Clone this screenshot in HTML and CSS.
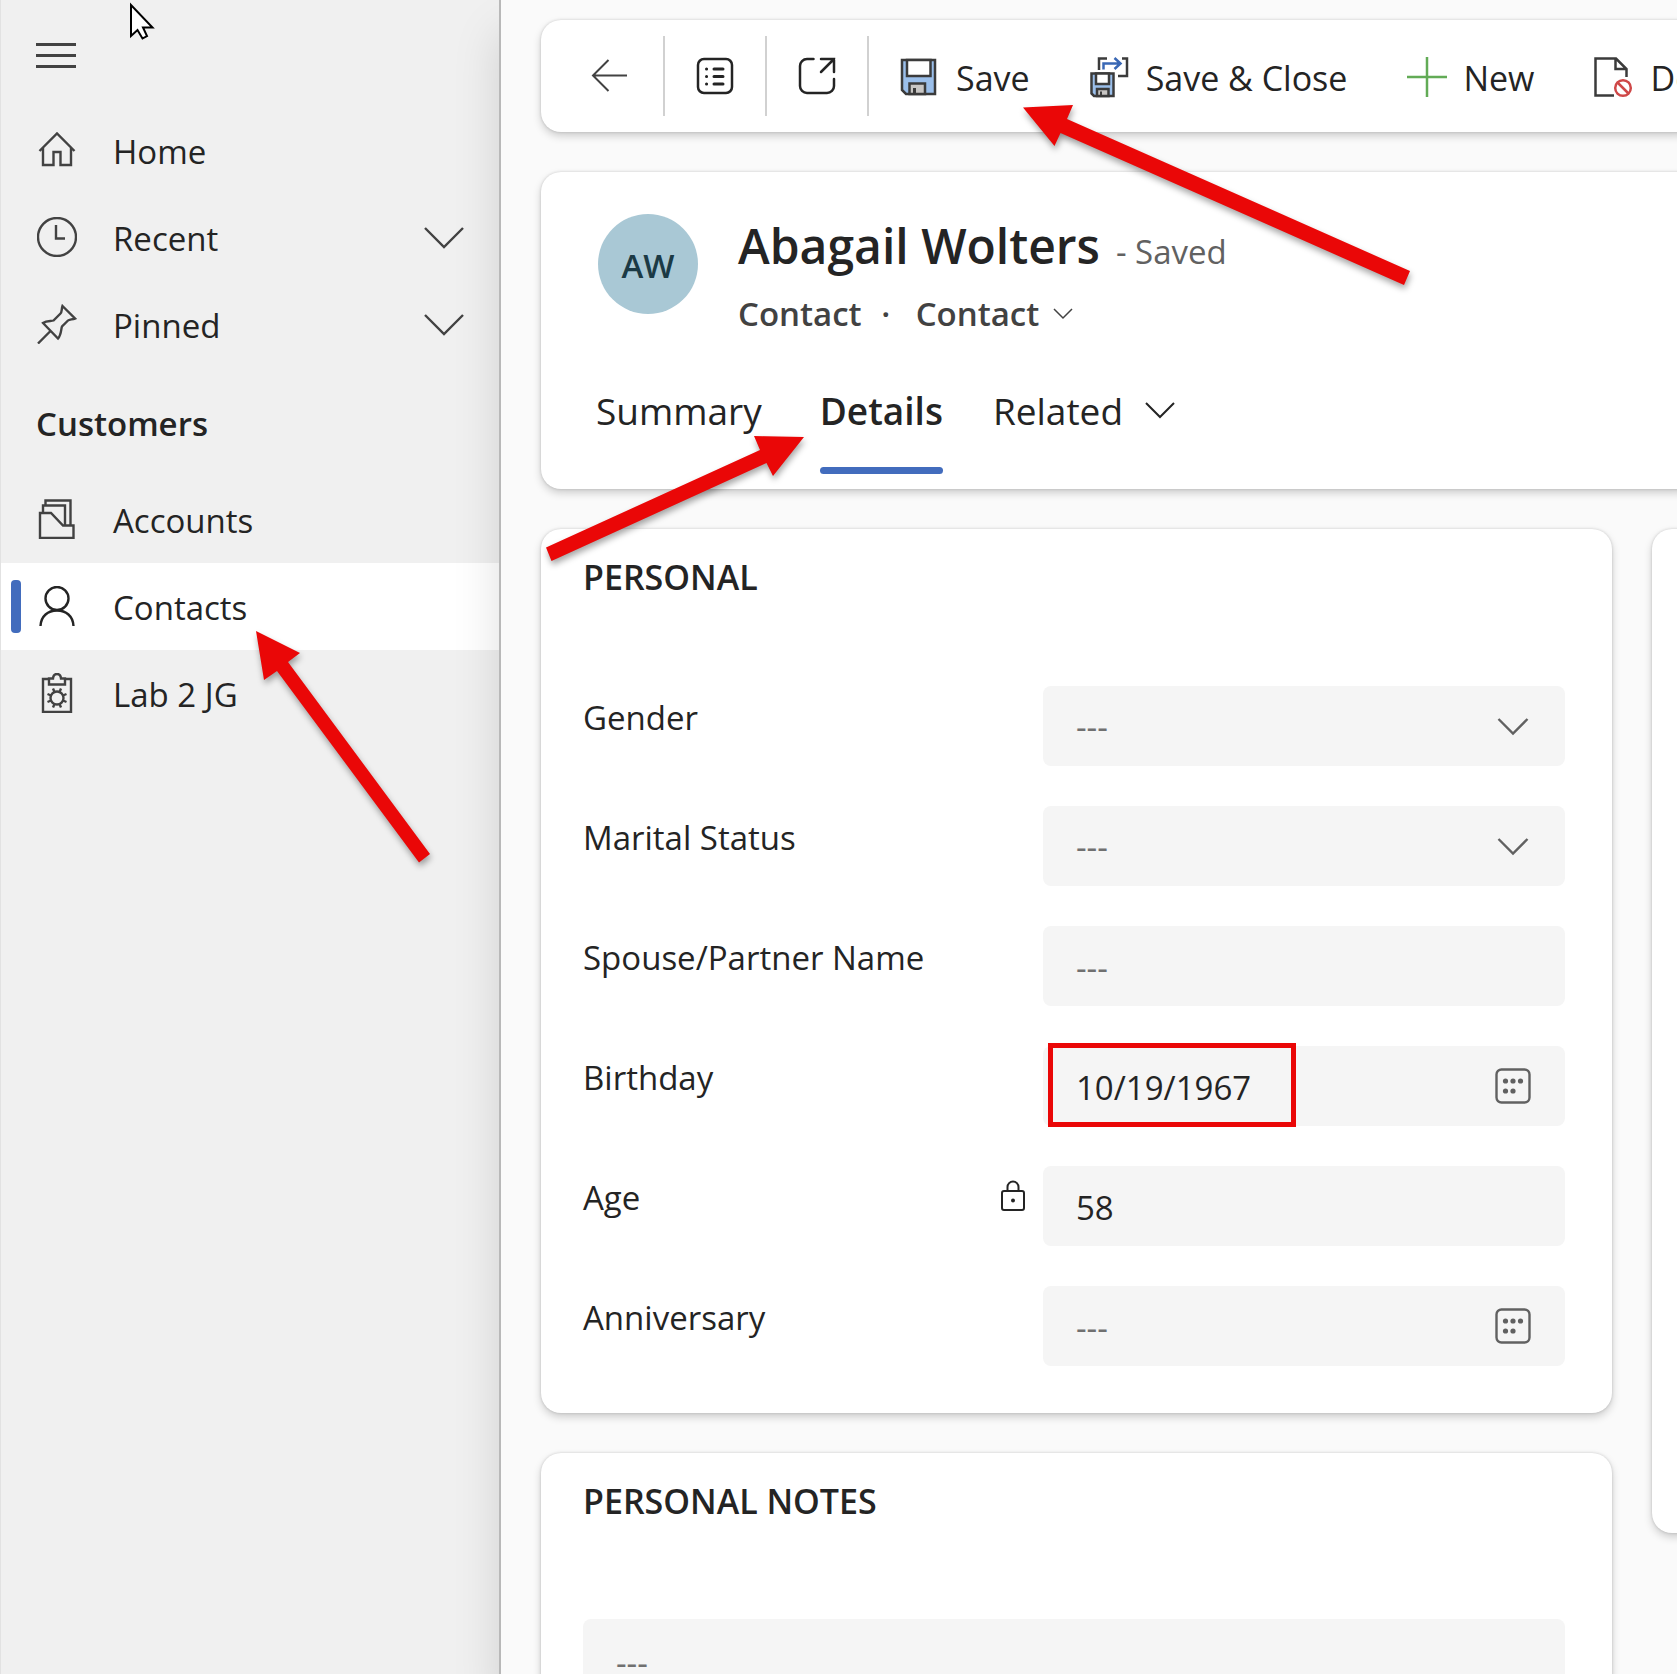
FILE: index.html
```html
<!DOCTYPE html>
<html lang="en">
<head>
<meta charset="utf-8">
<meta name="viewport" content="width=device-width, initial-scale=1">
<title>Contact: Abagail Wolters</title>
<link rel="stylesheet" href="styles.css">
</head>
<body>
<div class="app">
  <nav class="sidebar" aria-label="Site map">
    <button class="menu-toggle" type="button" aria-label="Toggle navigation">
      <svg width="40" height="40" viewBox="0 0 40 40" fill="none" stroke="#424242" stroke-width="3"><path d="M0 8.500h40M0 19.500h40M0 30.500h40"/></svg>
    </button>
    <a class="nav-item" href="#home">
      <svg class="nav-icon" viewBox="0 0 40 40"><path d="M2.500 21 20 3.500 37.500 21M6 18v17h10.500V22h7v13H34V18"/></svg>
      <span>Home</span>
    </a>
    <button class="nav-item" type="button">
      <svg class="nav-icon" viewBox="0 0 40 40"><circle cx="20" cy="20" r="19"/><path d="M19 8v13.500h9"/></svg>
      <span>Recent</span>
      <svg class="nav-chevron" viewBox="0 0 40 24"><path d="m1 2 19 19L39 2"/></svg>
    </button>
    <button class="nav-item" type="button">
      <svg class="nav-icon" viewBox="0 0 40 40"><path d="M25.500 2 38 14.500c-3 1-6 1-7 2l-6 6c-1 2-.5 8-4 12L6 19c4-3 8-1.500 10.500-2.500l7-7C25 8 24.500 5 25.500 2ZM13.500 27 1 39.500"/></svg>
      <span>Pinned</span>
      <svg class="nav-chevron" viewBox="0 0 40 24"><path d="m1 2 19 19L39 2"/></svg>
    </button>
    <h2 class="nav-heading">Customers</h2>
    <a class="nav-item" href="#accounts">
      <svg class="nav-icon" viewBox="0 0 40 40"><path d="M3 14v25h33.500V26.500H26L14 14ZM6 14V6.500h22v20M8.500 6.500v-5h25v25"/></svg>
      <span>Accounts</span>
    </a>
    <a class="nav-item nav-item-active" href="#contacts" aria-current="page">
      <svg class="nav-icon" viewBox="0 0 40 40"><circle cx="20" cy="12.500" r="11.500"/><path d="M3.500 40C4 30 11 24.500 20 24.500S36 30 36.500 40"/></svg>
      <span>Contacts</span>
    </a>
    <a class="nav-item" href="#lab-2">
      <svg class="nav-icon" viewBox="0 0 40 40"><path d="M12 6H6v33h28V6h-6M12 5.500h4c.5-6 7.500-6 8 0h4V11.500H12Z"/><circle cx="20" cy="25" r="6.500"/><path d="m17.500 19-1.500-3.500M22.500 19l1.500-3.500M17.500 31 16 34.500M22.500 31l1.500 3.500M14 22.500 10.500 21M14 27.500 10.500 29M26 22.500l3.500-1.500M26 27.500l3.500 1.500"/></svg>
      <span>Lab 2 JG</span>
    </a>
  </nav>

  <main class="main">
    <div class="card toolbar">
      <button class="tool tool-back" type="button" aria-label="Back">
        <svg width="40" height="40" viewBox="0 0 40 40" fill="none" stroke="#424242" stroke-width="2"><path d="M18.500 4 3 19.500 18.500 35M3 19.500h34"/></svg>
      </button>
      <button class="tool" type="button" aria-label="Show list">
        <svg width="40" height="40" viewBox="0 0 40 40" fill="none" stroke="#242424" stroke-width="2.500"><rect x="3" y="3" width="34" height="34" rx="6"/><path stroke-width="3" stroke-linecap="round" d="M19 13h9M19 20.500h9M19 28h9M11.500 13h.1M11.500 20.500h.1M11.500 28h.1"/></svg>
      </button>
      <button class="tool" type="button" aria-label="Open in new window">
        <svg width="40" height="40" viewBox="0 0 40 40" fill="none" stroke="#242424" stroke-width="2.500" stroke-linecap="round"><path d="M16.500 3H10a7 7 0 0 0-7 7v20a7 7 0 0 0 7 7h20a7 7 0 0 0 7-7v-7M24 3h13v13M37 3 24 16"/></svg>
      </button>
      <button class="command" type="button">
        <svg class="command-icon" viewBox="0 0 38 40"><path d="M2 3h33v34H6l-4-4Z" fill="#9bbfea" stroke="#3b3b3b" stroke-width="2.500"/><path d="M7 3h23.500v16H7Z" fill="#fff" stroke="#3b3b3b" stroke-width="2.500"/><path d="M9.500 37V26.500H25V37Z" fill="#c8c6c4" stroke="#3b3b3b" stroke-width="2.500"/><path d="M14.500 31v6" stroke="#3b3b3b" stroke-width="3"/></svg>
        <span>Save</span>
      </button>
      <button class="command" type="button">
        <svg class="command-icon" viewBox="0 0 38 40" fill="none"><path d="M17 1.500H9V13M32 1.500h5V19h-9" stroke="#3b3b3b" stroke-width="2.500"/><path d="M13.500 12.500V6.500H30M24.500 1l6 5.500-6 5.500" stroke="#3a68b5" stroke-width="2.500"/><path d="M1.500 16.500h22v22.500H4l-2.500-2.500Z" fill="#9bbfea" stroke="#3b3b3b" stroke-width="2.500"/><path d="M6 16.500h13V27H6Z" fill="#fff" stroke="#3b3b3b" stroke-width="2.500"/><path d="M7 39v-7h11.500v7Z" fill="#c8c6c4" stroke="#3b3b3b" stroke-width="2.500"/><path d="M11 34.500V38" stroke="#3b3b3b" stroke-width="2"/></svg>
        <span>Save &amp; Close</span>
      </button>
      <button class="command" type="button">
        <svg class="command-icon" viewBox="0 0 38 40"><path d="M20 0v40M0 20h40" stroke="#62ab56" stroke-width="2.500"/></svg>
        <span>New</span>
      </button>
      <button class="command" type="button">
        <svg class="command-icon" viewBox="0 0 38 40" fill="none"><path d="M20 38.500H1.500v-37H22L32.500 12v8M21.500 1.500V12H32" stroke="#3b3b3b" stroke-width="2.500"/><g stroke="#cf4848" stroke-width="2.500"><circle cx="29" cy="31" r="7.800"/><path d="m23.500 25.500 11 11"/></g></svg>
        <span>Deactivate</span>
      </button>
    </div>

    <header class="card record">
      <div class="identity">
        <div class="avatar" aria-hidden="true">AW</div>
        <div>
          <div class="title-line">
            <h1 class="record-name">Abagail Wolters</h1>
            <span class="record-state">- Saved</span>
          </div>
          <div class="record-meta">
            <span>Contact</span>
            <span class="meta-dot">·</span>
            <button class="form-switch" type="button">Contact
              <svg width="20" height="12" viewBox="0 0 20 12" fill="none" stroke="#424242" stroke-width="1.500"><path d="m1 1 9 9 9-9"/></svg>
            </button>
          </div>
        </div>
      </div>
      <div class="tabs" role="tablist">
        <button class="tab" type="button" role="tab">Summary</button>
        <button class="tab tab-active" type="button" role="tab" aria-selected="true">Details</button>
        <button class="tab" type="button" role="tab">Related
          <svg width="30" height="18" viewBox="0 0 30 18" fill="none" stroke="#242424" stroke-width="2"><path d="m1 1 14 14L29 1"/></svg>
        </button>
      </div>
    </header>

    <div class="columns">
      <div class="column">
        <section class="card section">
          <h2 class="section-title">PERSONAL</h2>
          <div class="fields">
            <div class="field">
              <label for="gender">Gender</label>
              <div class="control">
                <select class="empty" id="gender"><option>---</option></select>
                <svg class="control-icon" viewBox="0 0 36 36"><path d="m3.500 11 14.500 14.500L32.500 11"/></svg>
              </div>
            </div>
            <div class="field">
              <label for="marital">Marital Status</label>
              <div class="control">
                <select class="empty" id="marital"><option>---</option></select>
                <svg class="control-icon" viewBox="0 0 36 36"><path d="m3.500 11 14.500 14.500L32.500 11"/></svg>
              </div>
            </div>
            <div class="field">
              <label for="spouse">Spouse/Partner Name</label>
              <div class="control"><input id="spouse" type="text" placeholder="---"></div>
            </div>
            <div class="field">
              <label for="birthday">Birthday</label>
              <div class="control">
                <input id="birthday" type="text" value="10/19/1967">
                <svg class="control-icon" viewBox="0 0 36 36"><rect x="1.500" y="1.500" width="33" height="33" rx="5"/><g fill="#616161" stroke="none"><circle cx="10.500" cy="13" r="2.600"/><circle cx="18" cy="13" r="2.600"/><circle cx="25.500" cy="13" r="2.600"/><circle cx="10.500" cy="23" r="2.600"/><circle cx="18" cy="23" r="2.600"/></g></svg>
                <div class="highlight"></div>
              </div>
            </div>
            <div class="field">
              <label for="age">Age
                <svg class="lock" width="26" height="32" viewBox="0 0 26 32" fill="none" stroke="#242424" stroke-width="2"><rect x="2" y="11" width="22" height="19" rx="2"/><path d="M7.500 11V7a5.500 5.500 0 0 1 11 0v4"/><circle cx="13" cy="20.500" r="2" fill="#242424" stroke="none"/></svg>
              </label>
              <div class="control"><input id="age" type="text" value="58" readonly></div>
            </div>
            <div class="field">
              <label for="anniversary">Anniversary</label>
              <div class="control">
                <input id="anniversary" type="text" placeholder="---">
                <svg class="control-icon" viewBox="0 0 36 36"><rect x="1.500" y="1.500" width="33" height="33" rx="5"/><g fill="#616161" stroke="none"><circle cx="10.500" cy="13" r="2.600"/><circle cx="18" cy="13" r="2.600"/><circle cx="25.500" cy="13" r="2.600"/><circle cx="10.500" cy="23" r="2.600"/><circle cx="18" cy="23" r="2.600"/></g></svg>
              </div>
            </div>
          </div>
        </section>
        <section class="card section">
          <h2 class="section-title" id="notes-title">PERSONAL NOTES</h2>
          <textarea class="notes" rows="4" placeholder="---" aria-labelledby="notes-title"></textarea>
        </section>
      </div>
      <div class="column">
        <section class="card side-section"></section>
      </div>
    </div>
  </main>
</div>

<svg class="annotations" width="1430" height="880" viewBox="0 0 1430 880" fill="#ea0707" aria-hidden="true">
  <path d="M1023 107.500 1073 105 1067 119 1410 271 1404 285 1060.500 133 1054.500 146Z"/>
  <path d="M804 437 773 476 766.500 463 551.500 561 546 547.500 760 450 754 436Z"/>
  <path d="M256 631 300 653 288 662 430 854 419 862.500 277 671 264 680Z"/>
</svg>
<svg class="pointer" width="28" height="40" viewBox="0 0 28 40" fill="#fff" stroke="#000" stroke-width="2" aria-hidden="true"><path d="M2 5v31l6.500-6 5 8.500 4.500-2.500-4-8.500h9.500Z"/></svg>
</body>
</html>
```
FILE: styles.css
```css
* {
  box-sizing: border-box;
}

body {
  margin: 0;
  background: #fafafa;
  color: #242424;
  font: 400 33px/46px "Open Sans", "Segoe UI", sans-serif;
  overflow: hidden;
}

button,
input,
select,
textarea {
  margin: 0;
  border: 0;
  padding: 0;
  background: none;
  color: inherit;
  font: inherit;
  text-align: left;
}

h1,
h2 {
  margin: 0;
  font-weight: 600;
  font-size: inherit;
}

svg {
  flex: none;
}

.app {
  display: flex;
  height: 100vh;
}

/* Navigation */

.sidebar {
  flex: 0 0 499px;
  border-left: 1px solid #e2e2e2;
  background: #f0f0f0;
}

.menu-toggle {
  display: block;
  height: 107px;
  padding: 5px 35px 0;
}

.menu-toggle svg {
  display: block;
}

.nav-item {
  display: flex;
  align-items: center;
  gap: 36px;
  width: 100%;
  height: 87px;
  padding: 2px 35px 0 36px;
  color: inherit;
  text-decoration: none;
}

.nav-icon {
  width: 40px;
  height: 40px;
  margin-bottom: 4px;
  fill: none;
  stroke: #424242;
  stroke-width: 2.4;
}

.nav-chevron {
  width: 40px;
  height: 24px;
  margin-left: auto;
  margin-bottom: 2px;
  fill: none;
  stroke: #424242;
  stroke-width: 2.4;
}

.nav-item-active {
  position: relative;
  background: #fff;
}

.nav-item-active .nav-icon {
  stroke: #242424;
}

.nav-item-active::before {
  content: "";
  position: absolute;
  left: 10px;
  top: 17px;
  width: 10px;
  height: 53px;
  border-radius: 4px;
  background: #426cbd;
}

.nav-heading {
  padding: 33px 35px 29px;
}

/* Main area */

.main {
  position: relative;
  flex: 1;
  min-width: 0;
  display: flex;
  flex-direction: column;
  gap: 40px;
  padding: 20px 0 40px 40px;
  border-left: 2px solid #b8b8b8;
  background: #fafafa;
  box-shadow: 0 32px 44px rgba(0, 0, 0, 0.13);
  overflow: hidden;
}

.card {
  border-radius: 20px;
  background: #fff;
  box-shadow: 0 0 3px rgba(0, 0, 0, 0.16), 0 4px 9px rgba(0, 0, 0, 0.18);
}

/* These two bars run on past the right edge of the window */
.toolbar,
.record {
  flex: none;
  margin-right: -20px;
}

.toolbar {
  display: flex;
  align-items: center;
  height: 112px;
  padding-left: 16px;
  font-size: 34px;
  overflow: hidden;
}

.tool {
  flex: none;
  display: flex;
  align-items: center;
  justify-content: center;
  width: 102px;
  height: 80px;
  border-right: 2px solid #d1d1d1;
}

.tool-back {
  width: 108px;
}

.command {
  flex: none;
  display: flex;
  align-items: center;
  gap: 18px;
  padding: 2px 29px 0 31px;
}

.command span {
  padding-top: 2px;
}

.command-icon {
  width: 38px;
  height: 40px;
  overflow: visible;
}

/* Record header */

.record {
  padding: 42px 0 15px 55px;
}

.identity {
  display: flex;
  align-items: flex-start;
  gap: 40px;
}

.avatar {
  flex: none;
  width: 100px;
  height: 100px;
  margin-left: 2px;
  border-radius: 50%;
  background: #a9c8d5;
  color: #1b3a45;
  font-weight: 600;
  line-height: 104px;
  text-align: center;
}

.title-line {
  display: flex;
  align-items: baseline;
  gap: 16px;
}

.record-name {
  font-size: 48px;
  line-height: 64px;
}

.record-state {
  color: #616161;
}

.record-meta {
  display: flex;
  margin-top: 13px;
  color: #424242;
  font-weight: 600;
}

.meta-dot {
  width: 54px;
  padding-right: 6px;
  text-align: center;
}

.form-switch {
  display: flex;
  align-items: center;
  gap: 14px;
}

.tabs {
  display: flex;
  gap: 50px;
  margin-top: 11px;
  font-size: 37px;
}

.tab {
  position: relative;
  display: flex;
  align-items: center;
  gap: 22px;
  height: 126px;
}

.tab:first-child {
  margin-right: 8px;
}

.tab-active {
  font-weight: 600;
}

.tab-active::after {
  content: "";
  position: absolute;
  inset: auto 0 0;
  height: 7px;
  border-radius: 4px;
  background: #426cbd;
}

/* Form */

.columns {
  display: grid;
  grid-template-columns: calc(100% - 65px) calc(100% - 65px);
  gap: 40px;
}

.column {
  display: flex;
  flex-direction: column;
  gap: 40px;
}

.section {
  padding: 25px 47px 47px 42px;
}

.section-title {
  font-size: 34px;
}

.side-section {
  height: 1004px;
}

.fields {
  display: grid;
  gap: 40px;
  margin-top: 86px;
}

.field {
  display: grid;
  grid-template-columns: 460fr 522fr;
}

.field label {
  display: flex;
  justify-content: space-between;
  padding: 9px 17px 0 0;
}

.lock {
  margin-top: 5px;
}

.control {
  position: relative;
  height: 80px;
}

.control input,
.control select {
  appearance: none;
  width: 100%;
  height: 100%;
  padding: 3px 80px 0 33px;
  border-radius: 8px;
  background: #f5f5f5;
}

.control select {
  padding-top: 1px;
}

.control .empty,
::placeholder {
  color: #707070;
  opacity: 1;
}

.control-icon {
  position: absolute;
  right: 34px;
  top: 22px;
  width: 36px;
  height: 36px;
  fill: none;
  stroke: #616161;
  stroke-width: 2.4;
  pointer-events: none;
}

.highlight {
  position: absolute;
  left: 5px;
  top: -3px;
  width: 248px;
  height: 84px;
  border: 5px solid #ea0707;
  pointer-events: none;
}

.notes {
  display: block;
  width: 100%;
  margin-top: 95px;
  padding: 21px 33px;
  border-radius: 8px;
  background: #f5f5f5;
  resize: none;
}

/* Call-out arrows and pointer over the page */

.annotations,
.pointer {
  position: absolute;
  left: 0;
  top: 0;
  pointer-events: none;
}

.annotations {
  filter: drop-shadow(1px 4px 3px rgba(0, 0, 0, 0.35));
}

.pointer {
  left: 129px;
}
```
